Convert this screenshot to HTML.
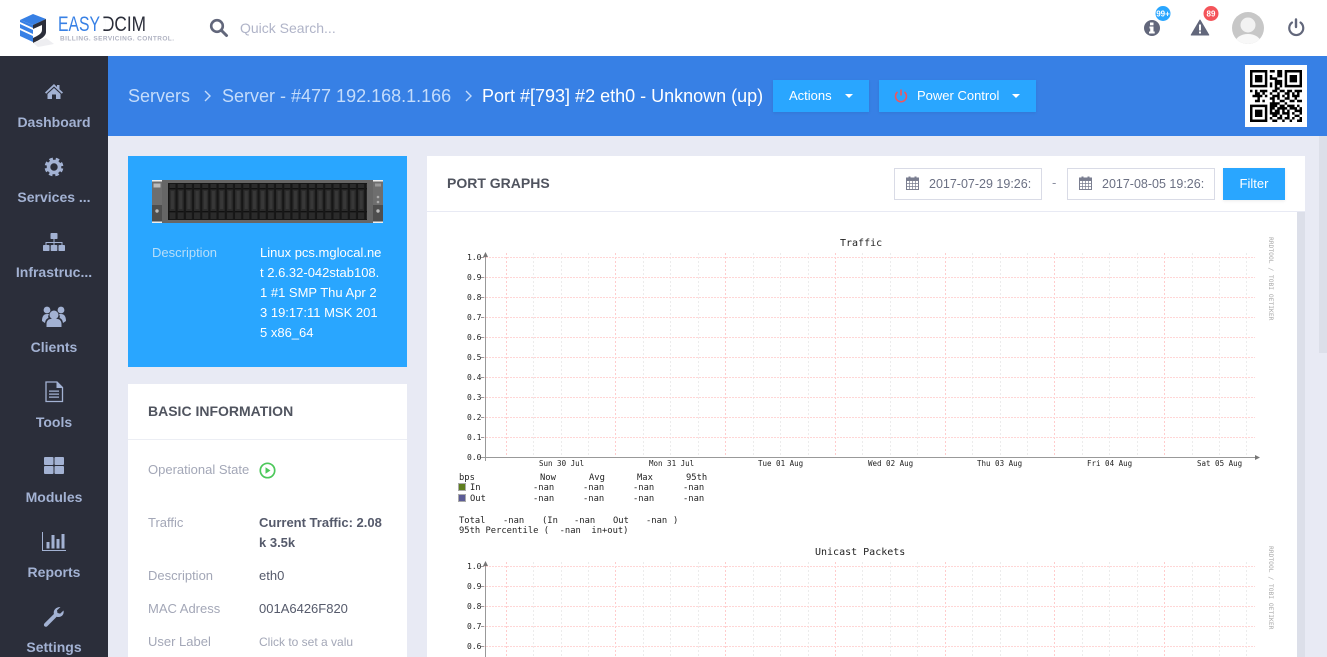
<!DOCTYPE html>
<html><head><meta charset="utf-8"><title>EasyDCIM</title>
<style>
html,body{margin:0;padding:0;width:1327px;height:657px;overflow:hidden;background:#e8eaf4;font-family:"Liberation Sans",sans-serif;font-size:13px}
.a{position:absolute;white-space:nowrap}
#top{left:0;top:0;width:1327px;height:56px;background:#fff}
#side{left:0;top:56px;width:108px;height:601px;background:#2b2e3a}
#band{left:108px;top:56px;width:1219px;height:80px;background:#3780e5}
.nav{left:0;width:108px;text-align:center;font-weight:bold;font-size:14px;line-height:16px;color:#a3b2d3}
.bc{font-size:18px;line-height:22px;top:85px;color:#c4dcfb}
.btn{background:#29a6ff;color:#fff;top:80px;height:32px;line-height:31px;box-shadow:0 1px 3px rgba(0,0,0,.08)}
.card{background:#fff}
.lb{color:#a3a7b7;line-height:18px}
.vl{color:#555a6b;line-height:18px}
.inp{top:168px;height:30px;width:146px;border:1px solid #d9dbe6;background:#fff;color:#6b7083;line-height:30px;font-size:12.500px}
svg{position:absolute;overflow:hidden}
.t{font-family:"DejaVu Sans Mono","Liberation Mono",monospace;fill:#222}
</style></head><body>
<div class="a" id="top"></div>
<div class="a" id="side"></div>
<div class="a" id="band"></div>

<!-- logo -->
<svg style="left:0;top:0" width="200" height="56" viewBox="0 0 200 56">
<path d="M33 43L46 38L54 44L38 47Z" fill="#eeeef1"/>
<path d="M20 20L33 14L46 19L33 25Z" fill="#3780e5"/>
<path d="M20 20L33 25V28L20 22Z" fill="#3780e5"/>
<path d="M20 24L33 30V34L20 28Z" fill="#3780e5"/>
<path d="M20 30L33 36V42L20 36Z" fill="#3780e5"/>
<path d="M33 25L46 19V32C46 37 39 40 33 43V38C37 36 42 34 42 30V25L33 29Z" fill="#2b2e3a"/>
<text x="58" y="31" font-size="21" fill="#3780e5" textLength="42" lengthAdjust="spacingAndGlyphs" font-family="Liberation Sans">EASY</text>
<text x="102" y="31" font-size="21" fill="#2b2e3a" textLength="44" lengthAdjust="spacingAndGlyphs" font-family="Liberation Sans">DCIM</text>
<rect x="102" y="18.200" width="3" height="11" fill="#fff"/>
<text x="60" y="40.500" font-size="6.500" fill="#b0b3c2" textLength="114" font-family="Liberation Sans" font-weight="bold">BILLING. SERVICING. CONTROL.</text>
</svg>

<!-- search -->
<svg style="left:209px;top:18px" width="20" height="20" viewBox="0 0 20 20"><circle cx="8" cy="8" r="5.800" fill="none" stroke="#62677b" stroke-width="2.600"/><path d="M12.500 12.500L17.500 17.500" stroke="#62677b" stroke-width="3" stroke-linecap="round"/></svg>
<div class="a" style="left:240px;top:19px;font-size:14px;line-height:18px;color:#b0b4c8">Quick Search...</div>

<!-- top icons -->
<svg style="left:1140px;top:0" width="187" height="56" viewBox="1140 0 187 56">
<circle cx="1152" cy="28" r="8" fill="#62677b"/><rect x="1150" y="22.500" width="3.500" height="2.800" fill="#fff"/><path d="M1149.500 26.500h4v5h1.200v2h-5.700v-2h1.200v-3h-.7z" fill="#fff"/>
<circle cx="1163" cy="13.500" r="7.500" fill="#29a6ff"/><text x="1163" y="16.300" font-size="8" font-weight="bold" fill="#fff" text-anchor="middle" font-family="Liberation Sans">99+</text>
<path d="M1200 20L1208.800 35H1191.200Z" fill="#62677b" stroke="#62677b" stroke-linejoin="round"/><rect x="1199" y="24.500" width="2" height="6" fill="#fff"/><rect x="1199" y="31.500" width="2" height="2" fill="#fff"/>
<circle cx="1211" cy="13.500" r="7.500" fill="#f4545a"/><text x="1211" y="16.300" font-size="8" font-weight="bold" fill="#fff" text-anchor="middle" font-family="Liberation Sans">89</text>
<clipPath id="av"><circle cx="1248" cy="28" r="16"/></clipPath>
<circle cx="1248" cy="28" r="16" fill="#c7c7c7"/><g clip-path="url(#av)"><circle cx="1248" cy="25" r="7.500" fill="#f2f2f2"/><ellipse cx="1248" cy="43" rx="13" ry="9" fill="#f8f8f8"/></g>
<path d="M1292 22.500A7 7 0 1 0 1300.500 22.500" fill="none" stroke="#62677b" stroke-width="2.200" stroke-linecap="round"/><path d="M1296 19.500V27" stroke="#62677b" stroke-width="2.400" stroke-linecap="round"/>
</svg>

<!-- nav -->
<svg style="left:0;top:56px" width="108" height="601" viewBox="0 56 108 601" fill="#a3b2d3">
<path d="M54 84L45 92.500L46.200 93.700L54 86.500L61.800 93.700L63 92.500L59.500 89.200V85H57V87ZM54 88L47.500 94V99H52V94.500H56V99H60.500V94Z"/>
<circle cx="54" cy="167" r="7.500" fill="none" stroke="#a3b2d3" stroke-width="3.800" stroke-dasharray="3.300 2.600" transform="rotate(10 54 167)"/><circle cx="54" cy="167" r="5.500" fill="none" stroke="#a3b2d3" stroke-width="3.600"/>
<rect x="50.500" y="233" width="7" height="6" rx=".8"/><rect x="43" y="245" width="6.500" height="6" rx=".8"/><rect x="50.700" y="245" width="6.600" height="6" rx=".8"/><rect x="58.500" y="245" width="6.500" height="6" rx=".8"/>
<path d="M53.500 239h1v3h8v3h-1v-2h-7v2h-1v-2h-7v2h-1v-3h8z"/>
<circle cx="47" cy="310" r="3.400"/><circle cx="61" cy="310" r="3.400"/><circle cx="54" cy="315" r="4.500"/><path d="M42 321c0-5 2-7 5-7h2c-1 2-1 3-.5 4-2 .7-3 2-3.500 5zM66 321c0-5-2-7-5-7h-2c1 2 1 3 .5 4 2 .7 3 2 3.500 5zM46.500 327v-3c0-3 2-5 4-5h7c2 0 4 2 4 5v3z"/>
<path d="M46 382h11l5.500 5.500V401.500H46Z" fill="none" stroke="#a3b2d3" stroke-width="1.300"/><path d="M56.500 382v6h6L56.500 382ZM49 390.500h10v1.200H49zM49 393.500h10v1.200H49zM49 396.500h10v1.200H49z"/>
<rect x="44" y="457" width="9.500" height="8" rx="1"/><rect x="54.500" y="457" width="9.500" height="8" rx="1"/><rect x="44" y="466" width="9.500" height="8" rx="1"/><rect x="54.500" y="466" width="9.500" height="8" rx="1"/>
<path d="M42 532h1v18h23v1H42z"/><rect x="46.500" y="542" width="3" height="6.500"/><rect x="51.500" y="535" width="3" height="13.500"/><rect x="56.500" y="539" width="3" height="9.500"/><rect x="61.500" y="534" width="3" height="14.500"/>
<path d="M63.500 610.500c.800 3-1 6.500-5 6.500-.8 0-1.300-.1-1.800-.3L47.500 626c-1 1-2.300 1-3 .2-.8-.8-.8-2 .1-3l9.300-9.200c-.8-3.500 1.600-7 6.600-7l-3.500 3.300.5 2.700 2.700.6z"/>
</svg>
<div class="a nav" style="top:114px">Dashboard</div>
<div class="a nav" style="top:189px">Services ...</div>
<div class="a nav" style="top:264px">Infrastruc...</div>
<div class="a nav" style="top:339px">Clients</div>
<div class="a nav" style="top:414px">Tools</div>
<div class="a nav" style="top:489px">Modules</div>
<div class="a nav" style="top:564px">Reports</div>
<div class="a nav" style="top:639px">Settings</div>

<!-- breadcrumb -->
<div class="a bc" style="left:128px">Servers</div>
<svg style="left:203px;top:90px" width="10" height="12" viewBox="0 0 10 12"><path d="M2 1L7 6L2 11" fill="none" stroke="#c4dcfb" stroke-width="1.400"/></svg>
<div class="a bc" style="left:222px">Server - #477 192.168.1.166</div>
<svg style="left:464px;top:90px" width="10" height="12" viewBox="0 0 10 12"><path d="M2 1L7 6L2 11" fill="none" stroke="#c4dcfb" stroke-width="1.400"/></svg>
<div class="a bc" style="left:482px;color:#fff">Port #[793] #2 eth0 - Unknown (up)</div>

<div class="a btn" style="left:773px;width:96px"><span class="a" style="left:16px">Actions</span><svg style="left:72px;top:14px" width="8" height="4"><path d="M0 0H8L4 4Z" fill="#fff"/></svg></div>
<div class="a btn" style="left:879px;width:157px"><svg style="left:15px;top:9px" width="14" height="14" viewBox="0 0 14 14"><path d="M3.500 3A5.500 5.500 0 1 0 10.500 3" fill="none" stroke="#f4545a" stroke-width="1.500"/><path d="M7 .5V6.500" stroke="#f4545a" stroke-width="1.600"/></svg><span class="a" style="left:38px">Power Control</span><svg style="left:133px;top:14px" width="8" height="4"><path d="M0 0H8L4 4Z" fill="#fff"/></svg></div>

<!-- QR -->
<div class="a" style="left:1245px;top:65px;width:62px;height:62px;background:#fff"></div>
<svg style="left:1250px;top:70px" width="52" height="52" viewBox="0 0 21 21"><path fill="none" stroke="#000" stroke-width="1" d="M0 .5h7M8 .5h2M11 .5h2M14 .5h7M0 1.500h1M6 1.500h1M11 1.500h2M14 1.500h1M20 1.500h1M0 2.500h1M2 2.500h3M6 2.500h1M8 2.500h1M11 2.500h2M14 2.500h1M16 2.500h3M20 2.500h1M0 3.500h1M2 3.500h3M6 3.500h1M8 3.500h3M14 3.500h1M16 3.500h3M20 3.500h1M0 4.500h1M2 4.500h3M6 4.500h1M10 4.500h3M14 4.500h1M16 4.500h3M20 4.500h1M0 5.500h1M6 5.500h1M8 5.500h1M10 5.500h3M14 5.500h1M20 5.500h1M0 6.500h7M8 6.500h1M10 6.500h1M12 6.500h1M14 6.500h7M10 7.500h2M0 8.500h1M2 8.500h1M4 8.500h3M9 8.500h2M12 8.500h2M15 8.500h2M18 8.500h3M2 9.500h2M5 9.500h1M8 9.500h1M11 9.500h1M14 9.500h2M17 9.500h1M19 9.500h1M1 10.500h4M6 10.500h1M9 10.500h3M13 10.500h1M15 10.500h1M17 10.500h3M3 11.500h1M8 11.500h2M11 11.500h1M14 11.500h2M18 11.500h1M2 12.500h2M5 12.500h1M9 12.500h1M12 12.500h2M16 12.500h2M19 12.500h2M8 13.500h4M14 13.500h1M0 14.500h7M8 14.500h3M12 14.500h2M15 14.500h3M19 14.500h1M0 15.500h1M6 15.500h1M8 15.500h2M11 15.500h4M16 15.500h3M20 15.500h1M0 16.500h1M2 16.500h3M6 16.500h1M8 16.500h1M10 16.500h2M13 16.500h1M15 16.500h1M18 16.500h3M0 17.500h1M2 17.500h3M6 17.500h1M8 17.500h4M13 17.500h3M17 17.500h1M20 17.500h1M0 18.500h1M2 18.500h3M6 18.500h1M9 18.500h2M12 18.500h1M15 18.500h1M18 18.500h2M0 19.500h1M6 19.500h1M8 19.500h1M11 19.500h2M14 19.500h2M17 19.500h1M20 19.500h1M0 20.500h7M9 20.500h2M13 20.500h1M16 20.500h1M19 20.500h2"/></svg>

<!-- blue card -->
<div class="a" style="left:128px;top:156px;width:279px;height:211px;background:#29a6ff"></div>
<svg style="left:152px;top:180px" width="231" height="43" viewBox="0 0 231 43">
<defs><pattern id="slot" x="16.500" y="3" width="8.200" height="37" patternUnits="userSpaceOnUse"><rect width="8.200" height="37" fill="#161616"/><rect x="1" y="1" width="6" height="35" fill="#2b2b2b"/><rect x="1" y="5" width="6" height="1.400" fill="#111"/><rect x="1" y="28" width="6" height="1.400" fill="#111"/><rect x="2.500" y="8" width="3" height="18" fill="#383838"/></pattern></defs>
<rect width="231" height="43" fill="#666"/>
<rect x="16" y="3" width="199" height="37" fill="url(#slot)"/>
<rect x="0" y="0" width="10" height="25" fill="#6e6e6e"/><rect x="221" y="0" width="10" height="25" fill="#6e6e6e"/><rect x="0" y="25" width="10" height="18" fill="#4e4e4e"/><rect x="221" y="25" width="10" height="18" fill="#4e4e4e"/>
<rect y="0" width="10" height="1.500" fill="#eee"/><rect x="221" width="10" height="1.500" fill="#eee"/><rect y="41.500" width="10" height="1.500" fill="#eee"/><rect x="221" y="41.500" width="10" height="1.500" fill="#eee"/>
<rect x="1.500" y="3.500" width="7" height="4" fill="#bbb"/><circle cx="5" cy="31" r="1.700" fill="#bbb"/><circle cx="226" cy="31" r="1.700" fill="#bbb"/><rect x="223" y="3.500" width="6" height="3" fill="#999"/><circle cx="226" cy="17" r="1.300" fill="#aaa"/><circle cx="226" cy="22" r="1.300" fill="#aaa"/>
</svg>
<div class="a" style="left:152px;top:244px;line-height:18px;color:#b7def9">Description</div>
<div class="a" style="left:260px;top:243px;line-height:20px;color:#fff">Linux pcs.mglocal.ne<br>t 2.6.32-042stab108.<br>1 #1 SMP Thu Apr 2<br>3 19:17:11 MSK 201<br>5 x86_64</div>

<!-- basic info -->
<div class="a card" style="left:128px;top:384px;width:279px;height:273px"></div>
<div class="a" style="left:128px;top:439px;width:279px;height:1px;background:#eceef4"></div>
<div class="a" style="left:148px;top:403px;font-size:14px;font-weight:bold;line-height:17px;color:#50545f">BASIC INFORMATION</div>
<div class="a lb" style="left:148px;top:461px">Operational State</div>
<svg style="left:259px;top:462px" width="17" height="17" viewBox="0 0 17 17"><circle cx="8.500" cy="8.500" r="7.200" fill="none" stroke="#4cc85a" stroke-width="1.700"/><path d="M6.500 5.300L11.500 8.500L6.500 11.700Z" fill="#4cc85a"/></svg>
<div class="a lb" style="left:148px;top:514px">Traffic</div>
<div class="a vl" style="left:259px;top:513px;font-weight:bold;line-height:20px">Current Traffic: 2.08<br>k 3.5k</div>
<div class="a lb" style="left:148px;top:567px">Description</div><div class="a vl" style="left:259px;top:567px">eth0</div>
<div class="a lb" style="left:148px;top:600px">MAC Adress</div><div class="a vl" style="left:259px;top:600px">001A6426F820</div>
<div class="a lb" style="left:148px;top:633px">User Label</div><div class="a lb" style="left:259px;top:633px;font-size:12px">Click to set a valu</div>

<!-- scrollbars -->
<div class="a" style="left:1319px;top:136px;width:8px;height:217px;background:#dcdfe9"></div>
<div class="a" style="left:1297px;top:212px;width:8px;height:445px;background:#dcdfe9"></div>

<!-- graph panel -->
<div class="a card" style="left:427px;top:212px;width:870px;height:445px"></div>
<div class="a card" style="left:427px;top:156px;width:878px;height:55px;border-bottom:1px solid #e8eaf4"></div>
<div class="a" style="left:447px;top:175px;font-size:14px;font-weight:bold;line-height:17px;color:#50545f">PORT GRAPHS</div>
<div class="a inp" style="left:894px"><span class="a" style="left:34px;width:102px;height:30px;overflow:hidden">2017-07-29 19:26:33</span></div>
<div class="a" style="left:1052px;top:175px;color:#8a8ea0">-</div>
<div class="a inp" style="left:1067px"><span class="a" style="left:34px;width:102px;height:30px;overflow:hidden">2017-08-05 19:26:33</span></div>
<svg style="left:906px;top:176px" width="13" height="14" viewBox="0 0 13 14"><g id="cal"><rect x=".5" y="2" width="12" height="11.500" fill="none" stroke="#7a7e90"/><rect x=".5" y="2" width="12" height="3" fill="#7a7e90"/><rect x="2.500" y=".5" width="2" height="3" fill="#7a7e90"/><rect x="8.500" y=".5" width="2" height="3" fill="#7a7e90"/><path d="M.5 7.500h12M.5 10.500h12M3.500 5v8M6.500 5v8M9.500 5v8" stroke="#7a7e90" stroke-width=".7"/></g></svg>
<svg style="left:1079px;top:176px" width="13" height="14" viewBox="0 0 13 14"><use href="#cal"/></svg>
<div class="a" style="left:1223px;top:168px;width:62px;height:32px;background:#29a6ff;color:#fff;text-align:center;line-height:31px;box-shadow:0 1px 3px rgba(0,0,0,.08)">Filter</div>

<!-- graphs -->
<svg style="left:0;top:0" width="1327" height="657" viewBox="0 0 1327 657">
<defs>
<path id="gh" fill="none" stroke="#ffd6d6" stroke-dasharray="2 1" d="M483 .5H1255"/>
</defs>
<g fill="none" transform="translate(0 253)">
<path stroke="#ececec" stroke-dasharray="2 2" d="M533.500 0V205M561.500 0V205M588.500 0V205M643.500 0V205M670.500 0V205M698.500 0V205M753.500 0V205M780.500 0V205M808.500 0V205M862.500 0V205M890.500 0V205M917.500 0V205M972.500 0V205M1000.500 0V205M1027.500 0V205M1082.500 0V205M1109.500 0V205M1137.500 0V205M1192.500 0V205M1219.500 0V205M1246.500 0V205"/>
<path stroke="#ffcccc" stroke-dasharray="2 2" d="M506.500 0V205M615.500 0V205M725.500 0V205M835.500 0V205M945.500 0V205M1054.500 0V205M1164.500 0V205"/>
</g>
<use href="#gh" y="257"/><use href="#gh" y="277"/><use href="#gh" y="297"/><use href="#gh" y="317"/><use href="#gh" y="337"/><use href="#gh" y="357"/><use href="#gh" y="377"/><use href="#gh" y="397"/><use href="#gh" y="417"/><use href="#gh" y="437"/>
<path d="M481 457.500H1255M485.500 461V255" stroke="#999" fill="none"/>
<path d="M485.500 252L483 257H488ZM1260 457.500L1255 455V460Z" fill="#777"/>
<path d="M481 257.500h3M481 277.500h3M481 297.500h3M481 317.500h3M481 337.500h3M481 357.500h3M481 377.500h3M481 397.500h3M481 417.500h3M481 437.500h3" stroke="#999"/>
<g font-size="8">
<text class="t" x="467" y="260">1.0</text><text class="t" x="467" y="280">0.9</text><text class="t" x="467" y="300">0.8</text><text class="t" x="467" y="320">0.7</text><text class="t" x="467" y="340">0.6</text><text class="t" x="467" y="360">0.5</text><text class="t" x="467" y="380">0.4</text><text class="t" x="467" y="400">0.3</text><text class="t" x="467" y="420">0.2</text><text class="t" x="467" y="440">0.1</text><text class="t" x="467" y="460">0.0</text>
</g>
<g font-size="7.500">
<text class="t" x="539" y="466">Sun 30 Jul</text><text class="t" x="649" y="466">Mon 31 Jul</text><text class="t" x="758" y="466">Tue 01 Aug</text><text class="t" x="868" y="466">Wed 02 Aug</text><text class="t" x="977" y="466">Thu 03 Aug</text><text class="t" x="1087" y="466">Fri 04 Aug</text><text class="t" x="1197" y="466">Sat 05 Aug</text>
</g>
<text class="t" x="840" y="246" font-size="10">Traffic</text>
<g font-size="8.800">
<text class="t" x="459" y="480">bps</text><text class="t" x="540" y="480">Now</text><text class="t" x="589" y="480">Avg</text><text class="t" x="637" y="480">Max</text><text class="t" x="686" y="480">95th</text>
<text class="t" x="470" y="490">In</text><text class="t" x="533" y="490">-nan</text><text class="t" x="583" y="490">-nan</text><text class="t" x="633" y="490">-nan</text><text class="t" x="683" y="490">-nan</text>
<text class="t" x="470" y="501">Out</text><text class="t" x="533" y="501">-nan</text><text class="t" x="583" y="501">-nan</text><text class="t" x="633" y="501">-nan</text><text class="t" x="683" y="501">-nan</text>
<text class="t" x="459" y="523">Total</text><text class="t" x="503" y="523">-nan</text><text class="t" x="542" y="523">(In</text><text class="t" x="574" y="523">-nan</text><text class="t" x="613" y="523">Out</text><text class="t" x="646" y="523">-nan</text><text class="t" x="673" y="523">)</text>
<text class="t" x="459" y="533" xml:space="preserve" style="white-space:pre">95th Percentile (  -nan  in+out)</text>
</g>
<rect x="458.500" y="483.500" width="7" height="7" fill="#5f7f1f" stroke="#aaa"/><rect x="458.500" y="494.500" width="7" height="7" fill="#5c5c96" stroke="#aaa"/>
<text class="t" font-size="6.300" style="fill:#aaa" transform="translate(1269 237) rotate(90)">RRDTOOL / TOBI OETIKER</text>

<g fill="none" transform="translate(0 562)">
<path stroke="#ececec" stroke-dasharray="2 2" d="M533.500 0V95M561.500 0V95M588.500 0V95M643.500 0V95M670.500 0V95M698.500 0V95M753.500 0V95M780.500 0V95M808.500 0V95M862.500 0V95M890.500 0V95M917.500 0V95M972.500 0V95M1000.500 0V95M1027.500 0V95M1082.500 0V95M1109.500 0V95M1137.500 0V95M1192.500 0V95M1219.500 0V95M1246.500 0V95"/>
<path stroke="#ffcccc" stroke-dasharray="2 2" d="M506.500 0V95M615.500 0V95M725.500 0V95M835.500 0V95M945.500 0V95M1054.500 0V95M1164.500 0V95"/>
</g>
<use href="#gh" y="566"/><use href="#gh" y="586"/><use href="#gh" y="606"/><use href="#gh" y="626"/><use href="#gh" y="646"/>
<path d="M485.500 564V657" stroke="#999" fill="none"/><path d="M485.500 561L483 566H488Z" fill="#777"/>
<path d="M481 566.500h3M481 586.500h3M481 606.500h3M481 626.500h3M481 646.500h3" stroke="#999"/>
<g font-size="8"><text class="t" x="467" y="569">1.0</text><text class="t" x="467" y="589">0.9</text><text class="t" x="467" y="609">0.8</text><text class="t" x="467" y="629">0.7</text><text class="t" x="467" y="649">0.6</text></g>
<text class="t" x="815" y="555" font-size="10">Unicast Packets</text>
<text class="t" font-size="6.300" style="fill:#aaa" transform="translate(1269 546) rotate(90)">RRDTOOL / TOBI OETIKER</text>
</svg>
</body></html>
